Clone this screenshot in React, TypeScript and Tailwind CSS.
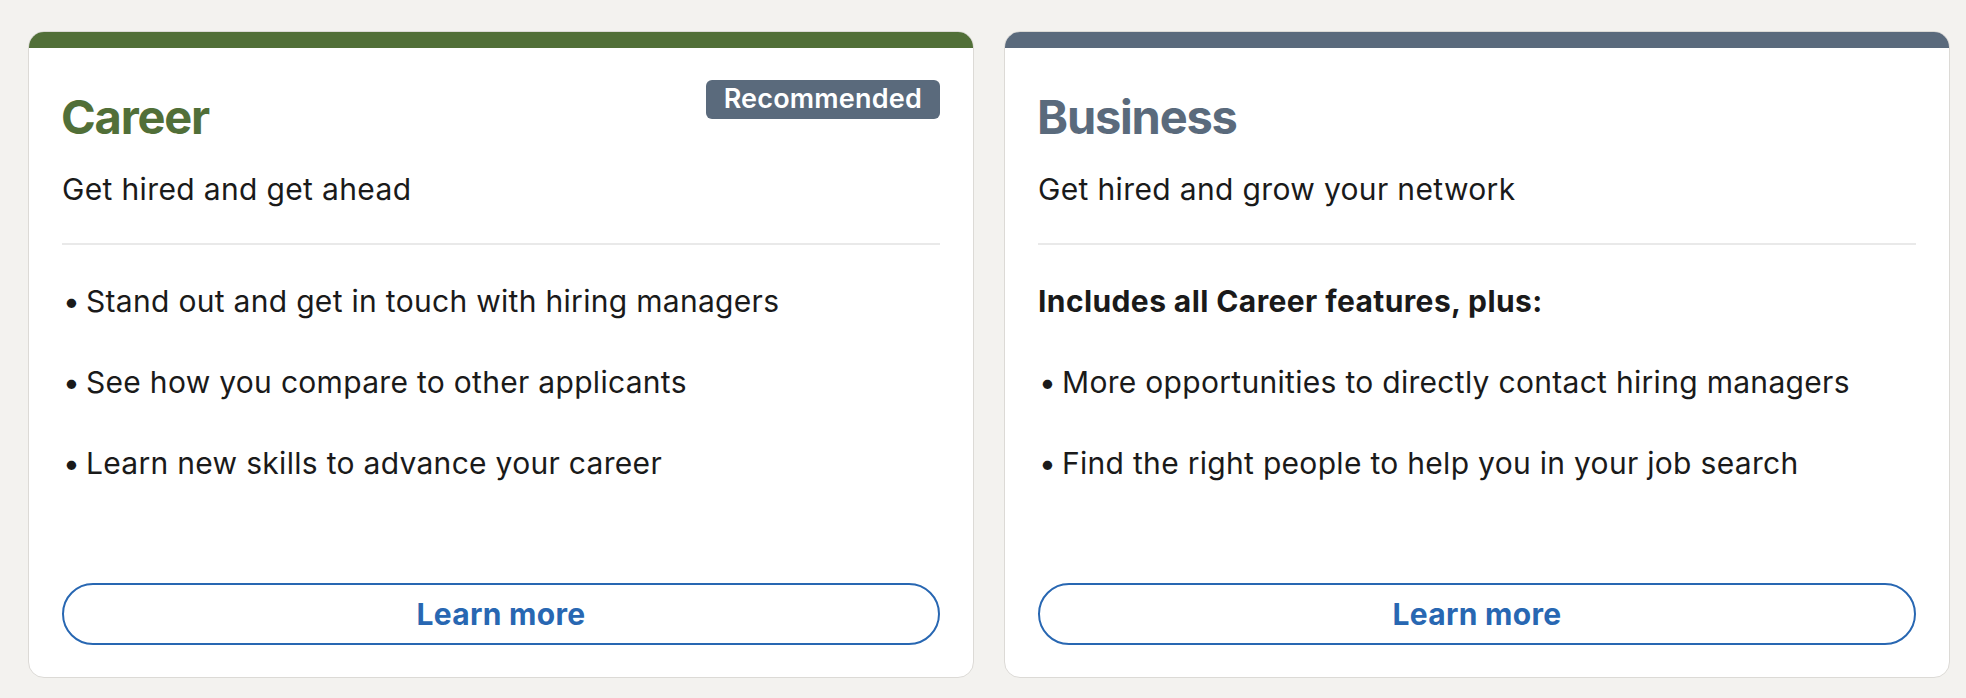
import { clsx } from 'clsx';

interface Plan {
    id: string;
    title: string;
    subtitle: string;
    lead?: string;
    features: string[];
    recommended?: boolean;
    accent: 'career' | 'business';
}

const plans: Plan[] = [
    {
        id: 'career',
        title: 'Career',
        subtitle: 'Get hired and get ahead',
        features: [
            'Stand out and get in touch with hiring managers',
            'See how you compare to other applicants',
            'Learn new skills to advance your career',
        ],
        recommended: true,
        accent: 'career',
    },
    {
        id: 'business',
        title: 'Business',
        subtitle: 'Get hired and grow your network',
        lead: 'Includes all Career features, plus:',
        features: [
            'More opportunities to directly contact hiring managers',
            'Find the right people to help you in your job search',
        ],
        accent: 'business',
    },
];

function PlanCard({ plan }: { plan: Plan }) {
    const isCareer = plan.accent === 'career';

    return (
        <div className="w-[946px] h-[647px] flex flex-col bg-white border border-[#dcdad6] rounded-[16px] overflow-hidden">
            {/* Accent bar */}
            <div className={clsx('h-[16px] shrink-0', isCareer ? 'bg-[#516f38]' : 'bg-[#5a6a7c]')} />

            <div className="flex-1 flex flex-col px-[33px] pt-[32px] pb-[32px]">
                {/* Header */}
                <div className="flex items-start justify-between">
                    <h2
                        className={clsx(
                            '-ml-[1px] mt-[9px] text-[47px] leading-[56px] font-bold tracking-[-1.2px]',
                            isCareer ? 'text-[#516f38]' : 'text-[#5a6a7c]'
                        )}
                    >
                        {plan.title}
                    </h2>
                    {plan.recommended && (
                        <span className="h-[39px] px-[18px] flex items-center rounded-[6px] bg-[#5a6a7c] text-white text-[27px] font-semibold tracking-[0.2px]">
                            Recommended
                        </span>
                    )}
                </div>

                <p className="mt-[24px] text-[30px] leading-[40px] text-[#1a1a1a] tracking-[0.35px]">{plan.subtitle}</p>

                <div className="mt-[34px] h-[2px] bg-[#e9e9e9]" />

                {/* Features */}
                <ul className="mt-[36px] flex flex-col gap-[41px] text-[30px] leading-[40px] text-[#1a1a1a] tracking-[0.3px]">
                    {plan.lead && <li className="font-bold tracking-[0.4px]">{plan.lead}</li>}
                    {plan.features.map(f => (
                        <li key={f} className="flex">
                            <span className="w-[24px] shrink-0 pl-[1px]">•</span>
                            <span>{f}</span>
                        </li>
                    ))}
                </ul>

                <button className="mt-auto h-[62px] w-full rounded-full border-2 border-[#2867b2] text-[#2867b2] text-[30px] font-bold tracking-[0.3px]">
                    Learn more
                </button>
            </div>
        </div>
    );
}

export default function App() {
    return (
        <div className="min-h-[698px] bg-[#f3f2ef] pt-[31px] pl-[28px] font-[family-name:Inter,sans-serif]">
            <div className="flex gap-[30px]">
                {plans.map(p => (
                    <PlanCard key={p.id} plan={p} />
                ))}
            </div>
        </div>
    );
}
